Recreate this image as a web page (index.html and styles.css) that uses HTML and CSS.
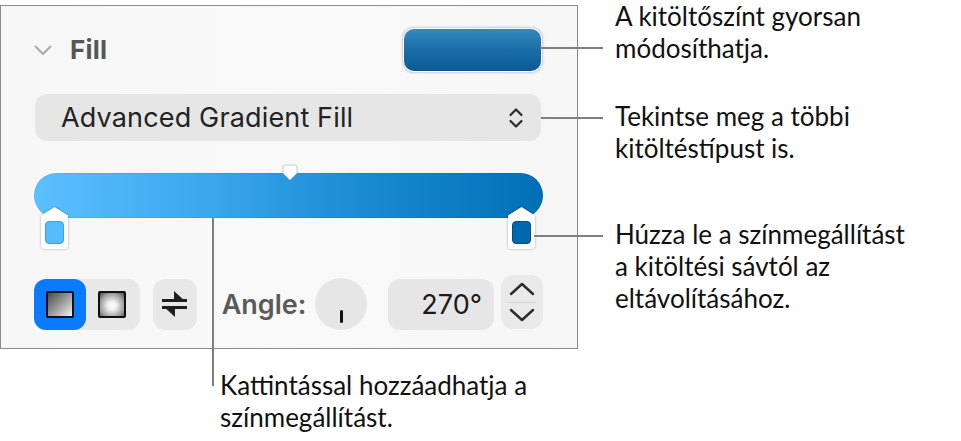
FILE: index.html
```html
<!DOCTYPE html>
<html lang="hu">
<head>
<meta charset="utf-8">
<title>Fill</title>
<link rel="stylesheet" href="styles.css">
</head>
<body>
<div class="stage">
  <div class="left">
    <section class="panel">
      <div class="header">
        <div class="title">
          <svg class="disclosure" width="18" height="11" viewBox="0 0 18 11"><polyline points="1.5,1.5 9,9 16.5,1.5" fill="none" stroke="#a9a9a9" stroke-width="2" stroke-linecap="round" stroke-linejoin="round"/></svg>
          <span class="fill-label">Fill</span>
        </div>
        <div class="well"></div>
      </div>

      <div class="popup">
        <span>Advanced Gradient Fill</span>
        <svg width="16" height="24" viewBox="0 0 16 24"><polyline points="2.5,9 8,3.5 13.5,9" fill="none" stroke="#2b2b2b" stroke-width="2.2" stroke-linecap="round" stroke-linejoin="round"/><polyline points="2.5,15 8,20.5 13.5,15" fill="none" stroke="#2b2b2b" stroke-width="2.2" stroke-linecap="round" stroke-linejoin="round"/></svg>
      </div>

      <div class="gradient">
        <div class="bar"></div>
        <svg class="mid" width="16" height="18" viewBox="0 0 16 18"><path d="M3 1 H13 Q15 1 15 3 V9 L8 16 L1 9 V3 Q1 1 3 1 Z" fill="#fff" stroke="#c9c9c9" stroke-width="1"/></svg>
        <div class="stop stop-left"><span class="swatch light"></span></div>
        <div class="stop stop-right"><span class="swatch dark"></span></div>
      </div>

      <div class="controls">
        <div class="segmented">
          <div class="seg active">
            <span class="sq linear"></span>
          </div>
          <div class="seg">
            <span class="sq radial"></span>
          </div>
        </div>
        <div class="btn swap">
          <svg width="27" height="28" viewBox="0 0 27 28"><path d="M1 10.5 H26" stroke="#1f1f1f" stroke-width="3"/><path d="M13 1 L13 12 L25 12 Z" fill="#1f1f1f"/><path d="M1 17.5 H26" stroke="#1f1f1f" stroke-width="3"/><path d="M14 16 L14 27 L2 16 Z" fill="#1f1f1f"/></svg>
        </div>
        <span class="angle-label">Angle:</span>
        <div class="dial"><span class="needle"></span></div>
        <div class="field">270°</div>
        <div class="stepper">
          <svg width="42" height="54" viewBox="0 0 42 54"><polyline points="10,19 21,9 32,19" fill="none" stroke="#2b2b2b" stroke-width="2.4" stroke-linecap="round" stroke-linejoin="round"/><line x1="7" y1="27.5" x2="35" y2="27.5" stroke="#d6d6d6" stroke-width="1.2"/><polyline points="10,35 21,45 32,35" fill="none" stroke="#2b2b2b" stroke-width="2.4" stroke-linecap="round" stroke-linejoin="round"/></svg>
        </div>
      </div>
    </section>
    <p class="callout bottom-note">Kattintással hozzáadhatja a<br>színmegállítást.</p>
  </div>

  <div class="notes">
    <p class="callout note-1">A kitöltőszínt gyorsan<br>módosíthatja.</p>
    <p class="callout note-2">Tekintse meg a többi<br>kitöltéstípust is.</p>
    <p class="callout note-3">Húzza le a színmegállítást<br>a kitöltési sávtól az<br>eltávolításához.</p>
  </div>

  <span class="leader h1"></span>
  <span class="leader h2"></span>
  <span class="leader h3"></span>
  <span class="leader v1"></span>
</div>
</body>
</html>
```

FILE: styles.css
```css
* { box-sizing: border-box; }

html, body {
  margin: 0;
  padding: 0;
  background: #ffffff;
}

.stage {
  position: relative;
  display: flex;
  width: 961px;
  height: 441px;
  overflow: hidden;
}

.left {
  width: 578px;
  flex: none;
}

.panel {
  margin-top: 5px;
  width: 578px;
  height: 344px;
  border: 1.5px solid #8c8c8c;
  background: linear-gradient(90deg, #f7f7f7, #f9f9f9 60%, #f6f6f6);
  padding: 22px 34px 0 33px;
  font-family: "Inter", "Roboto", sans-serif;
}

.header {
  display: flex;
  align-items: center;
  justify-content: space-between;
  height: 43px;
  padding-right: 2px;
}

.title {
  display: flex;
  align-items: center;
  gap: 18px;
}

.disclosure {
  margin-top: 2px;
}

.fill-label {
  font-size: 26px;
  font-weight: 700;
  color: #565656;
  letter-spacing: 0.2px;
}

.well {
  width: 137px;
  height: 42px;
  border-radius: 10px;
  background: linear-gradient(180deg, #3489bd 0%, #1a6ea7 50%, #0a5a93 100%);
  box-shadow: 0 0 0 1px rgba(255,255,255,0.9), 0 0 2px 1.5px rgba(0,0,0,0.18);
}

.popup {
  margin-top: 23px;
  margin-left: 1px;
  width: 506px;
  height: 47px;
  border-radius: 12px;
  background: #e6e6e6;
  display: flex;
  align-items: center;
  justify-content: space-between;
  padding: 0 17px 0 26px;
  font-size: 27px;
  letter-spacing: 0.15px;
  color: #232323;
}

.gradient {
  position: relative;
  margin-top: 23px;
  padding-top: 9px;
  height: 84px;
}

.bar {
  width: 509px;
  height: 45px;
  border-radius: 23px;
  background: linear-gradient(90deg, #5dc0ff 0%, #3aa6ec 35%, #1a8ad3 65%, #006fb6 100%);
  box-shadow: inset 0 0 0 1px rgba(0,0,0,0.06);
}

.mid {
  position: absolute;
  left: 248px;
  top: 0;
}

.stop {
  position: absolute;
  top: 43px;
  width: 27px;
  height: 42px;
  filter: drop-shadow(0 0 1px rgba(0,0,0,0.35));
}

.stop::before {
  content: "";
  position: absolute;
  left: 0;
  top: 0;
  width: 27px;
  height: 42px;
  background: #ffffff;
  clip-path: polygon(50% 0, 100% 20%, 100% 94%, 94% 100%, 6% 100%, 0 94%, 0 20%);
}

.stop-left { left: 7px; }
.stop-right { left: 474px; }

.swatch {
  position: absolute;
  left: 4px;
  top: 14px;
  width: 19px;
  height: 23px;
  border-radius: 4px;
}

.swatch.light {
  background: #55bcfd;
  border: 1px solid #3c9fe0;
}

.swatch.dark {
  background: #0068ad;
  border: 1px solid #004f88;
}

.controls {
  margin-top: 30px;
  display: flex;
  align-items: center;
  height: 52px;
}

.segmented {
  display: flex;
  width: 106px;
  height: 51px;
  border-radius: 12px;
  background: #e8e8e8;
}

.seg {
  width: 52px;
  height: 51px;
  border-radius: 12px;
  display: flex;
  align-items: center;
  justify-content: center;
}

.seg.active {
  background: #0a7aff;
}

.sq {
  width: 28px;
  height: 27px;
  border: 2.5px solid #111;
  border-radius: 2px;
}

.sq.linear {
  background: linear-gradient(135deg, #4a4a4a 0%, #9a9a9a 50%, #f2f2f2 100%);
}

.sq.radial {
  background: radial-gradient(circle at 50% 55%, #ffffff 0%, #f0f0f0 25%, #9a9a9a 70%, #4a4a4a 100%);
}

.btn {
  width: 44px;
  height: 51px;
  border-radius: 12px;
  background: #e8e8e8;
  display: flex;
  align-items: center;
  justify-content: center;
}

.swap {
  margin-left: 13px;
}

.angle-label {
  margin-left: 25px;
  font-size: 27px;
  font-weight: 600;
  color: #5a5a5a;
}

.dial {
  position: relative;
  margin-left: 9px;
  width: 52px;
  height: 52px;
  border-radius: 50%;
  background: #e6e6e6;
}

.needle {
  position: absolute;
  left: 24.5px;
  top: 32px;
  width: 3px;
  height: 13px;
  border-radius: 1.5px;
  background: #111;
}

.field {
  margin-left: 21px;
  width: 106px;
  height: 51px;
  border-radius: 12px;
  background: #e6e6e6;
  display: flex;
  align-items: center;
  justify-content: flex-end;
  padding-right: 12px;
  font-size: 27px;
  color: #1a1a1a;
}

.stepper {
  margin-left: 7px;
  margin-top: -4px;
  width: 42px;
  height: 54px;
  border-radius: 12px;
  background: #e9e9e9;
}

.stepper svg { display: block; }

.callout {
  margin: 0;
  font-family: "Lato", "Open Sans", sans-serif;
  font-size: 26px;
  line-height: 32px;
  color: #111;
}

.bottom-note {
  margin-top: 20px;
  margin-left: 220px;
}

.notes {
  padding-left: 37px;
  display: flex;
  flex-direction: column;
}

.note-1 { margin-top: 0; }
.note-2 { margin-top: 36px; }
.note-3 { margin-top: 54px; }

.leader {
  position: absolute;
  background: #7f7f7f;
}

.leader.h1 { left: 540px; top: 47px; width: 63px; height: 2px; }
.leader.h2 { left: 541px; top: 117px; width: 62px; height: 2px; }
.leader.h3 { left: 534px; top: 235px; width: 69px; height: 2px; }
.leader.v1 { left: 212px; top: 218px; width: 2px; height: 168px; }
```
